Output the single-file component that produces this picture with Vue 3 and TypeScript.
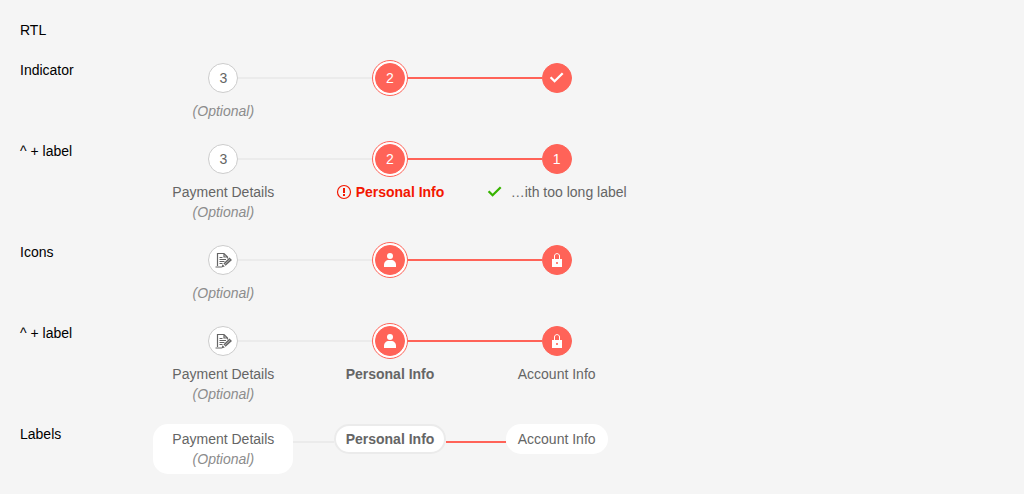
<script setup lang="ts">
type StepState = 'done' | 'current' | 'pending'
type IconName = 'check' | 'user' | 'lock' | 'form'
type Validation = 'error' | 'success'

interface Step {
  state: StepState
  text?: string
  icon?: IconName
  label?: string
  validation?: Validation
  optional?: boolean
}

interface StepperRow {
  title: string
  mode: 'indicator' | 'label'
  steps: Step[]
}

const rows: StepperRow[] = [
  {
    title: 'Indicator',
    mode: 'indicator',
    steps: [
      { state: 'done', icon: 'check' },
      { state: 'current', text: '2' },
      { state: 'pending', text: '3', optional: true },
    ],
  },
  {
    title: '^ + label',
    mode: 'indicator',
    steps: [
      { state: 'done', text: '1', label: '…ith too long label', validation: 'success' },
      { state: 'current', text: '2', label: 'Personal Info', validation: 'error' },
      { state: 'pending', text: '3', label: 'Payment Details', optional: true },
    ],
  },
  {
    title: 'Icons',
    mode: 'indicator',
    steps: [
      { state: 'done', icon: 'lock' },
      { state: 'current', icon: 'user' },
      { state: 'pending', icon: 'form', optional: true },
    ],
  },
  {
    title: '^ + label',
    mode: 'indicator',
    steps: [
      { state: 'done', icon: 'lock', label: 'Account Info' },
      { state: 'current', icon: 'user', label: 'Personal Info' },
      { state: 'pending', icon: 'form', label: 'Payment Details', optional: true },
    ],
  },
  {
    title: 'Labels',
    mode: 'label',
    steps: [
      { state: 'done', label: 'Account Info' },
      { state: 'current', label: 'Personal Info' },
      { state: 'pending', label: 'Payment Details', optional: true },
    ],
  },
]
</script>

<template>
  <main class="page">
    <div class="heading">RTL</div>
    <section v-for="(row, r) in rows" :key="r" class="row">
      <div class="title">{{ row.title }}</div>
      <ol class="stepper">
        <li v-for="(step, s) in row.steps" :key="s" class="step" :class="step.state">
          <a href="#" class="link" :aria-current="step.state === 'current' ? 'step' : undefined">
            <span class="head">
              <span class="track after"></span>
              <span v-if="row.mode === 'indicator'" class="ring">
                <span class="indicator">
                  <svg v-if="step.icon === 'check'" class="icon" viewBox="0 0 16 16">
                    <path d="M1.6 7.2 L5.6 11.2 L13.7 3.2" fill="none" stroke="currentColor" stroke-width="2.3" />
                  </svg>
                  <svg v-else-if="step.icon === 'user'" class="icon" viewBox="0 0 16 16">
                    <circle cx="8" cy="4" r="3" fill="currentColor" />
                    <path d="M2 15 V13 C2 10 4 8 7 8 H9 C12 8 14 10 14 13 V15 Z" fill="currentColor" />
                  </svg>
                  <svg v-else-if="step.icon === 'lock'" class="icon" viewBox="0 0 16 16">
                    <path d="M5.5 7 V4 C5.5 0.8 10.5 0.8 10.5 4 V7" fill="none" stroke="currentColor" />
                    <path fill-rule="evenodd" d="M3 7 H13 V15 H3 Z M7.2 10 V12 H8.8 V10 Z" fill="currentColor" />
                  </svg>
                  <svg v-else-if="step.icon === 'form'" class="icon" viewBox="0 0 16 16">
                    <path d="M12.5 6.5 V5 L9 1.5 H2.5 V14 M9 1.5 V5 H12.5" fill="none" stroke="currentColor" stroke-width="1.2" />
                    <path d="M4.5 5.5 H7.5 M4.5 7.5 H11 M4.5 9.5 H9.5 M4.5 11.5 H7.5 M0.5 15 H6.5" fill="none" stroke="currentColor" />
                    <path d="M7.6 12.2 L9.8 14.4 L6.2 15.6 Z M8.4 11.4 L14.5 5.6 L17 8.1 L10.6 13.8 Z" fill="currentColor" />
                    <path d="M9.5 12.6 L15 7.4" fill="none" stroke="#fff" stroke-width="0.5" />
                  </svg>
                  <template v-else>{{ step.text }}</template>
                </span>
              </span>
              <span v-else class="pill">
                <span class="text">{{ step.label }}</span>
                <span v-if="step.optional" class="optional">(Optional)</span>
              </span>
              <span class="track before"></span>
            </span>
            <span v-if="row.mode === 'indicator' && (step.label || step.optional)" class="label">
              <span v-if="step.label" class="text" :class="step.validation">
                <svg v-if="step.validation === 'error'" class="icon" viewBox="0 0 16 16">
                  <circle cx="8" cy="8" r="6.5" fill="none" stroke="currentColor" stroke-width="1.2" />
                  <path d="M8 4 V9 M8 10 V12" fill="none" stroke="currentColor" stroke-width="2" />
                </svg>
                <svg v-else-if="step.validation === 'success'" class="icon" viewBox="0 0 16 16">
                  <path d="M1.6 7.2 L5.6 11.2 L13.7 3.2" fill="none" stroke="currentColor" stroke-width="2.3" />
                </svg>
                <span class="caption">{{ step.label }}</span>
              </span>
              <span v-if="step.optional" class="optional">(Optional)</span>
            </span>
          </a>
        </li>
      </ol>
    </section>
  </main>
</template>

<style>
body {
  background: #f5f5f5;
}
</style>

<style scoped>
.page {
  display: flex;
  flex-direction: column;
  gap: 20px;
  padding: 20px;
  font: 14px/20px "Liberation Sans", Arial, sans-serif;
  color: #000;
}
.row {
  display: grid;
  grid-template-columns: 120px minmax(0, 500px);
}
.stepper {
  display: flex;
  flex-direction: row-reverse;
  margin: 0;
  padding: 0;
  list-style: none;
}
.step {
  flex: 1 1 0;
  min-width: 0;
}
.link {
  display: block;
  color: #656565;
  text-align: center;
  text-decoration: none;
}
.head {
  display: flex;
  align-items: flex-start;
}
.track {
  flex: 1 1 0;
  height: 2px;
  margin-top: 17px;
  background: #ebebeb;
}
.done .track,
.current .before {
  background: #ff6358;
}
.step:first-child .before,
.step:last-child .after {
  background: none;
}
.ring {
  padding: 3px 0;
}
.indicator {
  display: flex;
  align-items: center;
  justify-content: center;
  box-sizing: border-box;
  width: 30px;
  height: 30px;
  border: 1px solid #ccc;
  border-radius: 50%;
  background: #fff;
}
.done .indicator,
.current .indicator {
  border-color: #ff6358;
  background: #ff6358;
  color: #fff;
}
.current .ring {
  padding: 2px;
  border: 1px solid #ff6358;
  border-radius: 50%;
  background: #fff;
}
.icon {
  flex: none;
  width: 16px;
  height: 16px;
  overflow: visible;
}
.label {
  display: block;
  margin-top: 5px;
}
.text {
  display: flex;
  align-items: center;
  justify-content: center;
  gap: 4px;
  white-space: nowrap;
}
.optional {
  display: block;
  font-style: italic;
  color: #8c8c8c;
}
.current .text {
  font-weight: 700;
}
.text.error {
  color: #f31700;
}
.text.success {
  gap: 8px;
}
.success .icon {
  color: #37b400;
}
.pill {
  box-sizing: border-box;
  padding: 5px 12px;
  border-radius: 15px;
  background: #fff;
}
.pending .pill {
  min-width: 140px;
}
.current .pill {
  padding: 3px 10px;
  border: 2px solid #ebebeb;
}
</style>
